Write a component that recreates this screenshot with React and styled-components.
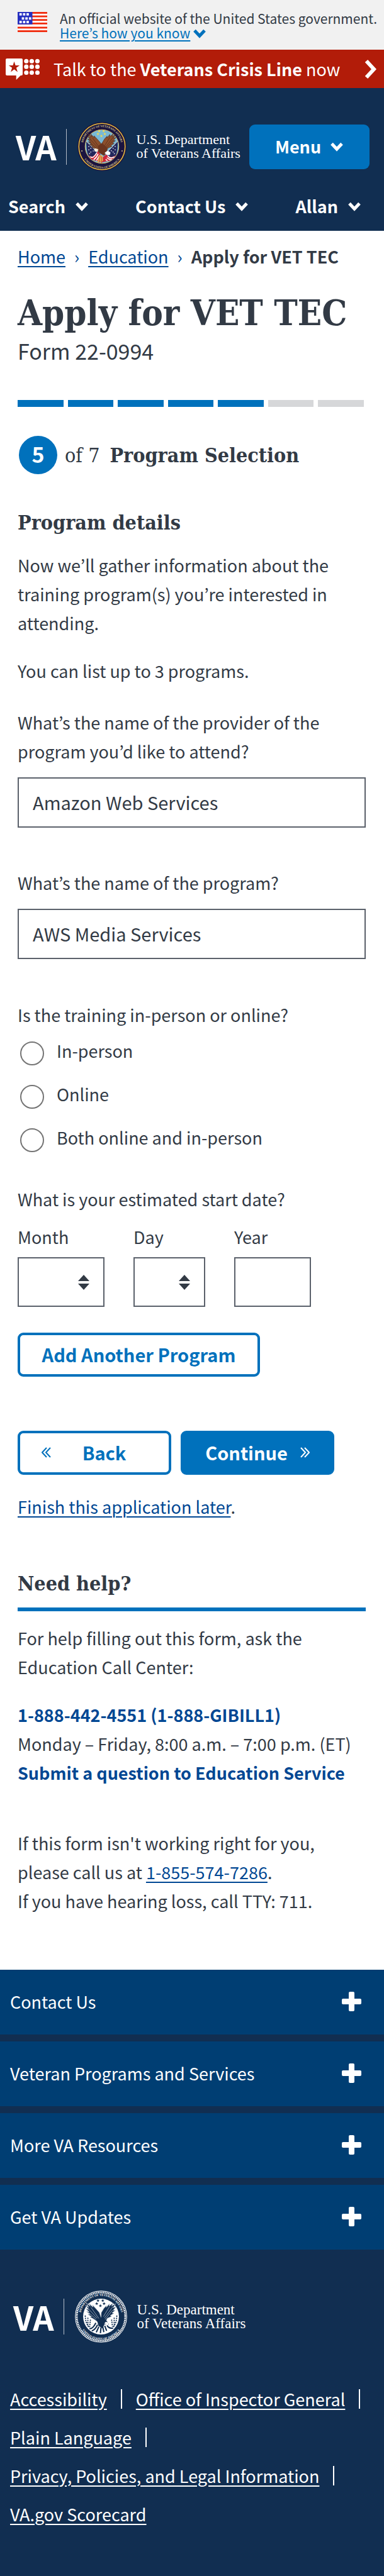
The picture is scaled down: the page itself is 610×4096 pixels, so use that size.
import React from "react";
import styled, { createGlobalStyle } from "styled-components";

const sans = '"Noto Sans CJK KR", "Noto Sans", sans-serif';
const slab = '"DejaVu Serif Condensed", "DejaVu Serif", serif';
const ink = "#323a45";
const blue = "#0071bc";
const link = "#004793";
const navy = "#112e51";

const GlobalStyle = createGlobalStyle`
  *, *::before, *::after { box-sizing: border-box; }
  body { margin: 0; background: #fff; color: ${ink}; font: 400 27px/46px ${sans}; }
  h1, h2, h3, p, ul, ol, fieldset, legend { margin: 0; padding: 0; border: 0; }
  ul, ol { list-style: none; }
  button, input, select { font: inherit; color: inherit; margin: 0; border-radius: 0; }
  button { cursor: pointer; }
  svg { display: block; flex: none; }
`;

const Page = styled.div`
  min-height: 100vh;
  display: flex;
  flex-direction: column;
`;

/* Government banner */
const GovBanner = styled.div`
  display: flex;
  gap: 20px;
  padding: 19px 8px 15px 28px;
  background: #f1f1f1;
  font-size: 21px;
  line-height: 23px;
`;
const GovText = styled.div`
  margin-top: -1px;
`;
const GovLink = styled.button`
  display: flex;
  align-items: center;
  gap: 4px;
  padding: 0;
  border: 0;
  background: none;
  color: ${blue};
  span { text-decoration: underline; text-decoration-thickness: 2px; text-underline-offset: 3px; }
`;

/* Crisis line */
const CrisisLine = styled.a`
  display: flex;
  align-items: center;
  height: 61px;
  padding: 0 12px 0 9px;
  background: #b21c09;
  color: #fff;
  text-decoration: none;
`;
const CrisisText = styled.span`
  flex: 1;
  margin-left: 22px;
`;

/* Header */
const Header = styled.header`
  padding: 54px 23px 0 25px;
  background: ${navy};
  color: #fff;
  height: 227px;
`;
const HeaderTop = styled.div`
  display: flex;
  align-items: center;
  justify-content: space-between;
`;
const Logo = styled.a`
  display: flex;
  align-items: center;
  color: #fff;
  text-decoration: none;
`;
const LogoMark = styled.span`
  font-size: 52px;
  line-height: 52px;
  font-weight: 700;
`;
const LogoRule = styled.span`
  width: 1px;
  height: 57px;
  margin: 0 17px 0 15px;
  background: #b5bdc9;
`;
const LogoName = styled.span`
  margin-left: 16px;
  font: 400 ${(p) => p.$size}px/22px "Liberation Serif", serif;
  white-space: nowrap;
`;
const MenuButton = styled.button`
  display: flex;
  align-items: center;
  justify-content: center;
  gap: 14px;
  width: 191px;
  height: 71px;
  border: 0;
  border-radius: 9px;
  background: ${blue};
  color: #fff;
  font-weight: 700;
`;
const HeaderNav = styled.nav`
  display: flex;
  justify-content: space-between;
  margin: 33px 13px 0 -12px;
`;
const NavButton = styled.button`
  display: flex;
  align-items: center;
  gap: 15px;
  padding: 0;
  border: 0;
  background: none;
  font-weight: 700;
  line-height: 46px;
`;

/* Main column */
const Main = styled.main`
  padding: 18px 29px 86px 28px;
`;
const Crumbs = styled.ol`
  display: flex;
  gap: 14px;
  li { display: flex; gap: 14px; }
  li + li::before { content: "›"; color: ${link}; }
  li:last-child { font-weight: 700; }
  li:last-child::before { font-weight: 400; }
`;
const TextLink = styled.a`
  color: ${link};
  text-decoration: underline;
  text-decoration-thickness: 2px;
  text-underline-offset: 4px;
`;
const StrongLink = styled.a`
  display: block;
  color: ${link};
  font-weight: 700;
  text-decoration: none;
`;
const Title = styled.h1`
  margin-top: 36px;
  font: 700 56px/60px ${slab};
  white-space: nowrap;
`;
const Subtitle = styled.p`
  margin-top: 8px;
  font-size: 34px;
`;
const Progress = styled.div`
  display: flex;
  gap: 7px;
  margin: 55px 3px 0 0;
`;
const Segment = styled.span`
  flex: 1;
  height: 11px;
  background: ${(p) => (p.$done ? blue : "#d6d7d9")};
`;
const StepHeading = styled.h2`
  display: flex;
  align-items: center;
  margin: 46px 0 0 2px;
  font: 700 32px/46px ${slab};
`;
const StepNumber = styled.span`
  width: 61px;
  height: 61px;
  margin-right: 12px;
  border-radius: 50%;
  background: ${blue};
  color: #fff;
  font: 700 34px/58px ${sans};
  text-align: center;
`;
const StepTotal = styled.span`
  margin-right: 16px;
  font-weight: 400;
`;
const SectionTitle = styled.h3`
  margin-top: ${(p) => p.$top}px;
  font: 700 32px/46px ${slab};
`;
const Text = styled.p`
  margin-top: ${(p) => p.$top}px;
`;
const Field = styled.div`
  margin-top: ${(p) => p.$top}px;
  label { display: block; }
`;
const TextInput = styled.input`
  display: block;
  width: 100%;
  height: 80px;
  margin-top: 18px;
  padding: 0 22px 2px;
  border: 2px solid #5b616b;
  background: #fff;
  font-size: 29px;
`;
const Group = styled.fieldset`
  min-width: 0;
  margin-top: ${(p) => p.$top}px;
`;
const RadioList = styled.div`
  display: flex;
  flex-direction: column;
  gap: 31px;
  margin: 19px 0 0 4px;
`;
const RadioRow = styled.label`
  display: flex;
  gap: 20px;
  height: 38px;
  line-height: 30px;
`;
const Radio = styled.input`
  appearance: none;
  width: 38px;
  height: 38px;
  border: 2px solid #757575;
  border-radius: 50%;
  background: #fff;
`;
const DateRow = styled.div`
  display: flex;
  gap: 46px;
  margin-top: 14px;
`;
const DatePart = styled.div`
  width: ${(p) => p.$width}px;
  label { display: block; }
`;
const SelectBox = styled.div`
  position: relative;
  svg { position: absolute; top: 28px; right: 24px; pointer-events: none; }
`;
const Select = styled.select`
  appearance: none;
  display: block;
  width: 100%;
  height: 79px;
  margin-top: 9px;
  border: 2px solid #5b616b;
  background: #fff;
`;
const YearInput = styled(TextInput)`
  height: 79px;
  margin-top: 9px;
`;
const Button = styled.button`
  display: flex;
  align-items: center;
  justify-content: center;
  gap: ${(p) => p.$gap || 0}px;
  width: ${(p) => p.$width}px;
  height: 70px;
  padding: 0 0 2px;
  border: 4px solid ${blue};
  border-radius: 9px;
  background: ${(p) => (p.$primary ? blue : "#fff")};
  color: ${(p) => (p.$primary ? "#fff" : blue)};
  font-weight: 700;
  font-size: 29px;
`;
const AddButton = styled(Button)`
  margin-top: 41px;
`;
const ButtonRow = styled.div`
  display: flex;
  gap: 15px;
  margin-top: 86px;
`;
const BackLabel = styled.span`
  margin-right: 34px;
`;
const HelpTitle = styled(SectionTitle)`
  padding-bottom: 15px;
  border-bottom: 6px solid ${blue};
`;

/* Footer */
const Footer = styled.footer`
  flex: 1;
  background: ${navy};
  color: #fff;
`;
const Accordion = styled.div`
  display: flex;
  flex-direction: column;
  gap: 11px;
`;
const AccordionButton = styled.button`
  display: flex;
  align-items: center;
  justify-content: space-between;
  height: 103px;
  padding: 0 36px 2px 16px;
  border: 0;
  background: #003e73;
  color: #fff;
`;
const FooterLogo = styled(Logo)`
  margin: 65px 0 0 21px;
`;
const FooterLinks = styled.ul`
  display: flex;
  flex-wrap: wrap;
  column-gap: 22px;
  margin: 59px 16px 0;
  padding-bottom: 60px;
  li { display: flex; align-items: center; height: 61px; }
  li:not(:last-child)::after { content: ""; width: 2px; height: 31px; margin-left: 22px; background: #fff; }
`;
const FooterLink = styled(TextLink)`
  color: #fff;
`;

const Caret = () => (
  <svg width="22" height="16" viewBox="0 0 22 16" aria-hidden="true">
    <path d="M3 3.5 L11 12 L19 3.5" fill="none" stroke="currentColor" strokeWidth="5" />
  </svg>
);

const Chevron = () => (
  <svg width="19" height="32" viewBox="0 0 19 32" aria-hidden="true">
    <path d="M3 3 L15 16 L3 29" fill="none" stroke="currentColor" strokeWidth="6" />
  </svg>
);

const Plus = () => (
  <svg width="31" height="31" viewBox="0 0 31 31" aria-hidden="true">
    <rect x="11" y="0" width="9" height="31" rx="2" fill="currentColor" />
    <rect x="0" y="11" width="31" height="9" rx="2" fill="currentColor" />
  </svg>
);

const SortArrows = () => (
  <svg width="18" height="24" viewBox="0 0 18 24" aria-hidden="true">
    <path d="M0 10 L9 0 L18 10 Z M0 14 H18 L9 24 Z" fill={ink} />
  </svg>
);

const Angles = ({ flip }) => (
  <svg width="15" height="17" viewBox="0 0 15 17" aria-hidden="true">
    <path
      d={flip ? "M1 1 L8 8.500 L1 16 M7 1 L14 8.500 L7 16" : "M8 1 L1 8.500 L8 16 M14 1 L7 8.500 L14 16"}
      fill="none"
      stroke="currentColor"
      strokeWidth="2"
    />
  </svg>
);

const Flag = () => (
  <svg width="47" height="32" viewBox="0 0 50 34" aria-hidden="true">
    <rect width="50" height="34" fill="#fff" />
    {[0, 6, 12, 18, 25, 31].map((y) => (
      <rect key={y} y={y} width="50" height="3" fill="#f02c0e" />
    ))}
    <rect width="25" height="21" fill="#242fc0" />
    {[[3, 2], [9, 2], [15, 2], [7, 9], [13, 9], [19, 9], [3, 15], [9, 15], [15, 15]].map(([x, y]) => (
      <rect key={`${x}-${y}`} x={x} y={y} width="4" height="4" fill="#fff" />
    ))}
  </svg>
);

const CrisisIcon = () => (
  <svg width="54" height="34" viewBox="0 0 168 106" aria-hidden="true">
    <path d="M6 0 H78 Q84 0 84 6 V78 Q84 84 78 84 H74 L52 106 V84 H6 Q0 84 0 78 V6 Q0 0 6 0 Z" fill="#fff" />
    <path d="M42 15 L48.500 34 H69 L52.500 46 L59 67 L42 54 L25 67 L31.500 46 L15 34 H35.500 Z" fill="#b21c09" />
    {[102, 129, 157].map((x) =>
      [13, 41, 70].map((y) => <circle key={`${x}-${y}`} cx={x} cy={y} r="11" fill="#fff" />)
    )}
  </svg>
);

const starPath = (x, y, r) =>
  Array.from({ length: 10 }, (_, i) => {
    const a = (Math.PI / 5) * i - Math.PI / 2;
    const q = i % 2 ? r * 0.4 : r;
    return `${i ? "L" : "M"}${(x + q * Math.cos(a)).toFixed(1)} ${(y + q * Math.sin(a)).toFixed(1)}`;
  }).join(" ") + " Z";

const crestStars = [[107, 45], [129, 45], [101, 59], [135, 59], [118, 69]];

const RingText = ({ id, color }) => (
  <g fill={color} fontFamily="Liberation Serif, serif" fontWeight="700" fontSize="14">
    <path id={`${id}-top`} d="M30 147 A95 95 0 1 1 212 147" fill="none" />
    <path id={`${id}-low`} d="M19 152 A106 106 0 0 0 223 152" fill="none" />
    <text textAnchor="middle">
      <textPath href={`#${id}-top`} startOffset="50%">DEPARTMENT OF VETERANS AFFAIRS</textPath>
    </text>
    <text textAnchor="middle">
      <textPath href={`#${id}-low`} startOffset="50%">UNITED STATES OF AMERICA</textPath>
    </text>
  </g>
);

const Wings = ({ fill, line }) => (
  <g fill={fill} stroke={line} strokeWidth="2" strokeLinejoin="round">
    <path d="M113 152 L94 137 L80 128 L70 124 L77 121 L60 111 L70 110 L54 98 L66 99 L50 84 L63 88 L49 68 L64 79 L52 57 L71 73 L64 58 L83 77 L82 68 L99 86 L113 102 L121 124 Z" />
    <path d="M121 128 L122 103 L134 83 L146 70 L146 78 L160 61 L159 72 L177 58 L170 72 L188 62 L177 80 L190 76 L177 92 L187 92 L172 104 L181 106 L164 116 L170 120 L150 129 L144 142 L130 154 Z" />
    <path d="M60 82 L103 129 M57 97 L98 133 M74 78 L111 130 M176 75 L137 127 M175 91 L139 135 M160 75 L132 121" fill="none" />
  </g>
);

const ColorSeal = () => (
  <svg width="78" height="78" viewBox="0 0 242 242" aria-hidden="true">
    <circle cx="121" cy="121" r="121" fill="#1b1440" />
    <circle cx="121" cy="121" r="114" fill="none" stroke="#e5b93c" strokeWidth="5" />
    <circle cx="121" cy="121" r="83" fill="#78b9d8" stroke="#d9b75a" strokeWidth="3" />
    <RingText id="seal" color="#d8c98e" />
    <circle cx="22" cy="143" r="3" fill="#d8c98e" />
    <circle cx="220" cy="143" r="3" fill="#d8c98e" />
    {crestStars.map(([x, y]) => (
      <path key={`${x}-${y}`} d={starPath(x, y, 8)} fill="#f4d94b" />
    ))}
    <path d="M44 95 L100 152 L82 176 L53 165 Q43 138 44 95 Z" fill="#23275c" />
    <path d="M198 95 L145 152 L158 178 L190 165 Q200 138 198 95 Z" fill="#23275c" />
    {[[56, 121], [56, 137], [66, 130], [66, 148], [78, 143], [186, 121], [186, 137], [176, 130], [176, 148], [167, 142], [60, 156], [182, 156]].map(([x, y]) => (
      <path key={`${x}-${y}`} d={starPath(x, y, 4)} fill="#fff" />
    ))}
    <path d="M42 93 L92 144 M200 93 L148 146" stroke="#d8d8cf" strokeWidth="3" />
    <path d="M55 163 Q70 180 85 162 L103 142 L121 178 L142 160 Q164 184 188 164 Q179 188 151 192 L120 199 L88 190 Q63 187 55 163 Z" fill="#d0273a" />
    <path d="M64 171 Q77 184 96 151 M80 186 Q94 176 102 157 M94 190 L110 164 M150 168 Q164 184 182 172 M145 176 Q158 188 169 184 M139 184 L148 191" fill="none" stroke="#fff" strokeWidth="5" />
    <Wings fill="#8b4f2c" line="#4a2616" />
    <path d="M101 119 L121 103 L145 126 L147 149 L131 167 L106 151 Z" fill="#6b351e" />
    <path d="M143 145 Q153 139 163 151 L159 164 L145 162 L134 153 Z" fill="#fff" />
    <path d="M82 132 Q91 127 103 136 L98 148 L85 145 Z" fill="#f5eee1" />
    <path d="M106 164 L99 202 L113 193 L116 204 L126 190 L124 165 Z" fill="#e9b94d" />
    <path d="M112 168 L107 200 M119 170 L119 203" stroke="#bd3540" strokeWidth="3" />
  </svg>
);

const WhiteSeal = () => (
  <svg width="83" height="83" viewBox="0 0 242 242" aria-hidden="true">
    <circle cx="121" cy="121" r="119" fill={navy} stroke="#fff" strokeWidth="3" />
    <circle cx="121" cy="121" r="112" fill="none" stroke="#fff" strokeWidth="8" strokeDasharray="5 3" />
    <RingText id="footer-seal" color="#fff" />
    <circle cx="121" cy="121" r="83" fill="#fff" />
    {crestStars.map(([x, y]) => (
      <path key={`${x}-${y}`} d={starPath(x, y + 2, 8)} fill={navy} />
    ))}
    <Wings fill={navy} line="#c7ced8" />
    <path d="M48 116 Q48 150 66 172 M60 126 L60 162 M72 135 L68 170 M194 116 Q194 150 176 172 M182 126 L182 162 M170 135 L174 168" fill="none" stroke={navy} strokeWidth="5" strokeDasharray="6 4" />
    <path d="M103 141 L121 124 L147 141 L158 157 L137 157 L128 176 L109 164 Z" fill={navy} />
    <path d="M143 145 L159 150 L151 159 L136 153 Z" fill="#fff" />
    <path d="M67 177 Q82 180 97 150 M78 187 Q93 184 105 159 M99 194 L111 168 M118 198 L121 171 M134 193 L129 168 M147 187 L138 164 M177 174 Q157 178 149 162" fill="none" stroke={navy} strokeWidth="6" />
  </svg>
);

const segments = [true, true, true, true, true, false, false];
const trainingTypes = ["In-person", "Online", "Both online and in-person"];
const footerSections = ["Contact Us", "Veteran Programs and Services", "More VA Resources", "Get VA Updates"];
const footerLinks = [
  "Accessibility",
  "Office of Inspector General",
  "Plain Language",
  "Privacy, Policies, and Legal Information",
  "VA.gov Scorecard",
];

export default function App() {
  return (
    <Page>
      <GlobalStyle />
      <GovBanner>
        <Flag />
        <GovText>
          An official website of the United States government.
          <GovLink type="button">
            <span>Here’s how you know</span>
            <Caret />
          </GovLink>
        </GovText>
      </GovBanner>
      <CrisisLine href="#crisis-line">
        <CrisisIcon />
        <CrisisText>
          Talk to the <b>Veterans Crisis Line</b> now
        </CrisisText>
        <Chevron />
      </CrisisLine>
      <Header>
        <HeaderTop>
          <Logo href="#home">
            <LogoMark>VA</LogoMark>
            <LogoRule />
            <ColorSeal />
            <LogoName $size={22}>
              U.S. Department
              <br />
              of Veterans Affairs
            </LogoName>
          </Logo>
          <MenuButton type="button">
            Menu
            <Caret />
          </MenuButton>
        </HeaderTop>
        <HeaderNav>
          {["Search", "Contact Us", "Allan"].map((item) => (
            <NavButton key={item} type="button">
              {item}
              <Caret />
            </NavButton>
          ))}
        </HeaderNav>
      </Header>

      <Main>
        <nav aria-label="Breadcrumb">
          <Crumbs>
            <li><TextLink href="#home">Home</TextLink></li>
            <li><TextLink href="#education">Education</TextLink></li>
            <li aria-current="page">Apply for VET TEC</li>
          </Crumbs>
        </nav>
        <Title>Apply for VET TEC</Title>
        <Subtitle>Form 22-0994</Subtitle>
        <Progress aria-hidden="true">
          {segments.map((done, i) => (
            <Segment key={i} $done={done} />
          ))}
        </Progress>
        <StepHeading>
          <StepNumber>5</StepNumber>
          <StepTotal>of 7</StepTotal>
          Program Selection
        </StepHeading>

        <SectionTitle $top={54}>Program details</SectionTitle>
        <Text $top={22}>
          Now we’ll gather information about the training program(s) you’re interested in attending.
        </Text>
        <Text $top={30}>You can list up to 3 programs.</Text>
        <Field $top={36}>
          <label htmlFor="provider">What’s the name of the provider of the program you’d like to attend?</label>
          <TextInput id="provider" type="text" defaultValue="Amazon Web Services" />
        </Field>
        <Field $top={65}>
          <label htmlFor="program">What’s the name of the program?</label>
          <TextInput id="program" type="text" defaultValue="AWS Media Services" />
        </Field>
        <Group $top={66}>
          <legend>Is the training in-person or online?</legend>
          <RadioList>
            {trainingTypes.map((type) => (
              <RadioRow key={type}>
                <Radio type="radio" name="training" value={type} />
                {type}
              </RadioRow>
            ))}
          </RadioList>
        </Group>
        <Group $top={52}>
          <legend>What is your estimated start date?</legend>
          <DateRow>
            <DatePart $width={138}>
              <label htmlFor="month">Month</label>
              <SelectBox>
                <Select id="month" defaultValue=""><option value="" /></Select>
                <SortArrows />
              </SelectBox>
            </DatePart>
            <DatePart $width={114}>
              <label htmlFor="day">Day</label>
              <SelectBox>
                <Select id="day" defaultValue=""><option value="" /></Select>
                <SortArrows />
              </SelectBox>
            </DatePart>
            <DatePart $width={122}>
              <label htmlFor="year">Year</label>
              <YearInput id="year" type="text" inputMode="numeric" />
            </DatePart>
          </DateRow>
        </Group>
        <AddButton type="button" $width={385}>Add Another Program</AddButton>
        <ButtonRow>
          <Button type="button" $width={244} $gap={50}>
            <Angles />
            <BackLabel>Back</BackLabel>
          </Button>
          <Button type="submit" $width={244} $gap={20} $primary>
            Continue
            <Angles flip />
          </Button>
        </ButtonRow>
        <Text $top={28}>
          <TextLink href="#later">Finish this application later</TextLink>.
        </Text>

        <HelpTitle $top={76}>Need help?</HelpTitle>
        <Text $top={20}>For help filling out this form, ask the Education Call Center:</Text>
        <Text as="div" $top={30}>
          <StrongLink href="tel:18884424551">1-888-442-4551 (1-888-GIBILL1)</StrongLink>
          Monday – Friday, 8:00 a.m. – 7:00 p.m. (ET)
          <StrongLink href="#question">Submit a question to Education Service</StrongLink>
        </Text>
        <Text $top={66}>
          If this form isn't working right for you,
          <br />
          please call us at <TextLink href="tel:18555747286">1-855-574-7286</TextLink>.
          <br />
          If you have hearing loss, call TTY: 711.
        </Text>
      </Main>

      <Footer>
        <Accordion>
          {footerSections.map((name) => (
            <AccordionButton key={name} type="button" aria-expanded="false">
              {name}
              <Plus />
            </AccordionButton>
          ))}
        </Accordion>
        <FooterLogo href="#home">
          <LogoMark>VA</LogoMark>
          <LogoRule />
          <WhiteSeal />
          <LogoName $size={23}>
            U.S. Department
            <br />
            of Veterans Affairs
          </LogoName>
        </FooterLogo>
        <FooterLinks>
          {footerLinks.map((name) => (
            <li key={name}>
              <FooterLink href="#footer">{name}</FooterLink>
            </li>
          ))}
        </FooterLinks>
      </Footer>
    </Page>
  );
}
